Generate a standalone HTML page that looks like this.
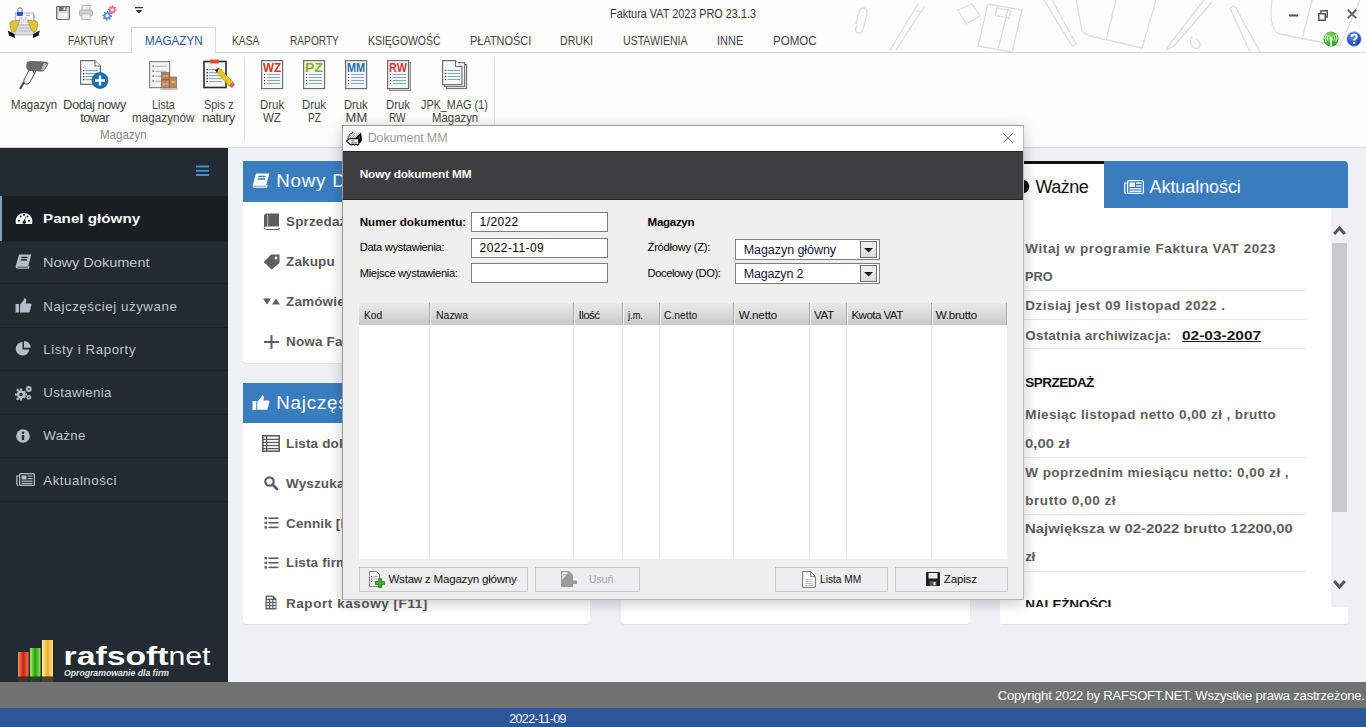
<!DOCTYPE html><html><head><meta charset="utf-8"><style>
*{margin:0;padding:0;box-sizing:border-box}
html,body{width:1366px;height:727px;overflow:hidden;background:#eef0f6;font-family:"Liberation Sans",sans-serif;position:relative}
.a{position:absolute}
.t{position:absolute;white-space:nowrap}
svg{position:absolute;overflow:visible}
</style></head><body>
<div class="a" style="left:0px;top:0px;width:1366px;height:147px;background:#fdfdfd;"></div>
<svg style="left:840px;top:0px" width="526" height="52" viewBox="0 0 526 52"><g fill="none" stroke="#dedede" stroke-width="1.3" stroke-linejoin="round">
<path d="M17 26 Q14 30 17 33 Q21 34 23 30 L27 14 Q28 9 24 8 Q20 8 19 12 L16 24"/>
<path d="M78 4 L50 50 M84 7 L56 50 M76 10 L82 12"/>
<path d="M118 10 L132 4 L140 16 L126 24 Z"/>
<path d="M148 4 L182 10 L172 52 L138 46 Z M168 9 L158 50"/><rect x="156" y="9" width="14" height="8" transform="rotate(12 163 13)"/>
<path d="M204 0 L232 46 L236 44 L212 0"/>
<path d="M236 0 L242 30 Q244 34 250 36 L302 48 L316 0"/><path d="M276 0 L266 40"/>
<path d="M364 0 L330 44 L326 50 L334 46 L372 2"/>
<path d="M352 36 Q348 42 354 48 Q360 50 360 44 L356 38"/>
<path d="M390 8 Q396 4 398 12 L420 52 M390 8 L410 52"/>
<path d="M432 0 Q428 30 440 34 L500 46 L520 0 M472 0 L462 40"/>
</g></svg>
<div class="a" style="left:0px;top:52px;width:131px;height:1px;background:#d9d9d9;"></div>
<div class="a" style="left:216px;top:52px;width:1150px;height:1px;background:#d9d9d9;"></div>
<div class="a" style="left:131px;top:27px;width:85px;height:26px;border:1px solid #d9d9d9;border-bottom:none;background:#fdfdfd"></div>
<div class="a" style="left:0px;top:147px;width:1366px;height:1px;background:#d6d6d6;"></div>
<div class="a" style="left:244px;top:58px;width:1px;height:82px;background:#e4e4e4;"></div>
<div class="a" style="left:494px;top:58px;width:1px;height:82px;background:#e4e4e4;"></div>
<div class="a" style="left:0px;top:148px;width:228px;height:534px;background:#232a31;"></div>
<div class="a" style="left:0px;top:196px;width:228px;height:45px;background:#191e23;"></div>
<div class="a" style="left:0px;top:196px;width:2px;height:45px;background:#7aa3c0;"></div>
<div class="a" style="left:0px;top:241px;width:228px;height:1px;background:#1c2227;"></div>
<div class="a" style="left:0px;top:283px;width:228px;height:1px;background:#1c2227;"></div>
<div class="a" style="left:0px;top:327px;width:228px;height:1px;background:#1c2227;"></div>
<div class="a" style="left:0px;top:370px;width:228px;height:1px;background:#1c2227;"></div>
<div class="a" style="left:0px;top:414px;width:228px;height:1px;background:#1c2227;"></div>
<div class="a" style="left:0px;top:457px;width:228px;height:1px;background:#1c2227;"></div>
<div class="a" style="left:0px;top:501px;width:228px;height:1px;background:#1c2227;"></div>
<div class="a" style="left:243px;top:161px;width:347px;height:202px;background:#fff;border-radius:3px;box-shadow:0 1px 1px rgba(0,0,0,.06)"></div>
<div class="a" style="left:243px;top:161px;width:347px;height:41px;background:#3a7dbe"></div>
<div class="a" style="left:243px;top:383px;width:347px;height:241px;background:#fff;border-radius:3px;box-shadow:0 1px 1px rgba(0,0,0,.06)"></div>
<div class="a" style="left:243px;top:383px;width:347px;height:40px;background:#3a7dbe"></div>
<div class="a" style="left:621px;top:161px;width:349px;height:463px;background:#fff;border-radius:3px;box-shadow:0 1px 1px rgba(0,0,0,.06)"></div>
<div class="a" style="left:1000px;top:161px;width:348px;height:463px;background:#fff;border-radius:3px;box-shadow:0 1px 1px rgba(0,0,0,.06)"></div>
<div class="a" style="left:1000px;top:161px;width:104px;height:3px;background:#111"></div>
<div class="a" style="left:1104px;top:161px;width:244px;height:47px;background:#3a7dbe;border-radius:0 4px 0 0"></div>
<div class="a" style="left:1024px;top:290px;width:282px;height:1px;background:#e6e6e6;"></div>
<div class="a" style="left:1024px;top:319px;width:282px;height:1px;background:#e6e6e6;"></div>
<div class="a" style="left:1024px;top:348px;width:282px;height:1px;background:#e6e6e6;"></div>
<div class="a" style="left:1024px;top:457px;width:282px;height:1px;background:#e6e6e6;"></div>
<div class="a" style="left:1024px;top:514px;width:282px;height:1px;background:#e6e6e6;"></div>
<div class="a" style="left:1024px;top:571px;width:282px;height:1px;background:#e6e6e6;"></div>
<div class="a" style="left:1331px;top:208px;width:17px;height:399px;background:#f0eff2;"></div>
<div class="a" style="left:1332px;top:243px;width:15px;height:269px;background:#c9c8cc;"></div>
<div class="a" style="left:0px;top:682px;width:1366px;height:26px;background:#707272;"></div>
<div class="a" style="left:0px;top:708px;width:1366px;height:19px;background:#2b579a;"></div>
<svg style="left:4px;top:4px" width="40" height="38" viewBox="0 0 40 38">
<path d="M14 9 V5.5 Q14 3.8 16 3.8 Q18 3.8 18 5.5 V9" fill="none" stroke="#666" stroke-width="1"/>
<path d="M27.5 9.5 L30.5 11 V24 H28 Z" fill="#e8e8e8" stroke="#999" stroke-width="0.6"/>
<rect x="11.2" y="9" width="18.5" height="12" fill="#fbfbfd" stroke="#8a8a9a" stroke-width="0.7"/>
<rect x="12.8" y="8.1" width="6" height="3.8" fill="#2450c0"/>
<path d="M15 14 H19 M21 14 H23 M22 11.5 H26" stroke="#8890a0" stroke-width="0.7"/>
<rect x="14" y="15.2" width="11" height="5.8" fill="#e2c6d6"/>
<path d="M14 17.2 H25 M14 19.2 H25 M16.2 15.2 V21 M18.4 15.2 V21 M20.6 15.2 V21 M22.8 15.2 V21" stroke="#fff" stroke-width="0.6"/>
<path d="M12 21 H29 L30 31 H11.5 Z" fill="#dcdde0" stroke="#a0a0a8" stroke-width="0.6"/>
<path d="M14 24 H27 M13.5 27 H27.5" stroke="#b8b8c0" stroke-width="0.8"/>
<path d="M5.8 18.5 Q8 15.5 10.5 17 L15.7 16.3 Q16.5 17.5 14.5 19 L12.8 24.5 Q11 28.5 8 28.3 Q5.5 24 5.8 18.5 Z" fill="#e2c33c" stroke="#9a8420" stroke-width="0.6"/>
<path d="M33.7 18.5 Q31.5 15.5 29 17 L23.8 16.3 Q23 17.5 25 19 L26.7 24.5 Q28.5 28.5 31.5 28.3 Q34 24 33.7 18.5 Z" fill="#e2c33c" stroke="#9a8420" stroke-width="0.6"/>
<path d="M3.8 26.5 L10.5 30 L11 34 L5 31.5 Z" fill="#111"/>
<path d="M35.8 26.5 L29.2 30 L28.8 34 L34.6 31.5 Z" fill="#111"/>
</svg>
<svg style="left:56px;top:6px" width="14" height="14" viewBox="0 0 14 14"><rect x="0.6" y="0.6" width="12.8" height="12.8" rx="0.8" fill="#d8d8d8" stroke="#6e6e6e" stroke-width="1.2"/>
<rect x="3" y="0.6" width="7.5" height="4.5" fill="#6e6e6e"/><rect x="7.5" y="1.3" width="2" height="3" fill="#ddd"/>
<rect x="2.5" y="7" width="9" height="6" fill="#f3f3f3"/></svg>
<svg style="left:79px;top:5px" width="14" height="15" viewBox="0 0 14 15"><rect x="3" y="0.5" width="8" height="5" fill="#f2f2f2" stroke="#b9b9b9"/>
<rect x="0.5" y="5" width="13" height="6" rx="1.5" fill="#cfcfcf" stroke="#b0b0b0"/>
<rect x="3" y="9" width="8" height="5.5" fill="#f5f5f5" stroke="#b9b9b9"/></svg>
<svg style="left:102px;top:5px" width="15" height="16" viewBox="0 0 15 16"><path d="M14.80 4.80 L14.71 5.70 L13.25 6.06 L12.94 6.63 L13.45 8.05 L12.76 8.62 L11.46 7.85 L10.84 8.04 L10.20 9.40 L9.30 9.31 L8.94 7.85 L8.37 7.54 L6.95 8.05 L6.38 7.36 L7.15 6.06 L6.96 5.44 L5.60 4.80 L5.69 3.90 L7.15 3.54 L7.46 2.97 L6.95 1.55 L7.64 0.98 L8.94 1.75 L9.56 1.56 L10.20 0.20 L11.10 0.29 L11.46 1.75 L12.03 2.06 L13.45 1.55 L14.02 2.24 L13.25 3.54 L13.44 4.16 Z M11.7 4.8 A1.5 1.5 0 1 0 8.7 4.8 A1.5 1.5 0 1 0 11.7 4.8 Z" fill="#e87a80" fill-rule="evenodd"/><path d="M10.20 10.80 L10.10 11.78 L8.53 12.18 L8.19 12.80 L8.74 14.34 L7.98 14.96 L6.58 14.13 L5.90 14.33 L5.20 15.80 L4.22 15.70 L3.82 14.13 L3.20 13.79 L1.66 14.34 L1.04 13.58 L1.87 12.18 L1.67 11.50 L0.20 10.80 L0.30 9.82 L1.87 9.42 L2.21 8.80 L1.66 7.26 L2.42 6.64 L3.82 7.47 L4.50 7.27 L5.20 5.80 L6.18 5.90 L6.58 7.47 L7.20 7.81 L8.74 7.26 L9.36 8.02 L8.53 9.42 L8.73 10.10 Z M6.9 10.8 A1.7 1.7 0 1 0 3.5 10.8 A1.7 1.7 0 1 0 6.9 10.8 Z" fill="#5f92d6" fill-rule="evenodd"/></svg>
<svg style="left:135px;top:7px" width="8" height="7" viewBox="0 0 8 7"><rect x="0" y="0" width="8" height="1.3" fill="#333"/><path d="M0.5 3 H7.5 L4 6.5 Z" fill="#333"/></svg>
<svg style="left:1289px;top:14px" width="9" height="3" viewBox="0 0 9 3"><rect x="0" y="0.5" width="9" height="2" fill="#555"/></svg>
<svg style="left:1318px;top:10px" width="10" height="11" viewBox="0 0 10 11"><rect x="0.75" y="3.75" width="6.5" height="6.5" fill="none" stroke="#555" stroke-width="1.5"/><path d="M3 3.5 V0.75 H9.25 V7 H7.5" fill="none" stroke="#555" stroke-width="1.5"/></svg>
<svg style="left:1347px;top:9px" width="10" height="10" viewBox="0 0 10 10"><path d="M0.8 0.8 L9.2 9.2 M9.2 0.8 L0.8 9.2" stroke="#555" stroke-width="1.7"/></svg>
<svg style="left:1323px;top:31px" width="16" height="16" viewBox="0 0 16 16"><defs><radialGradient id="gg" cx="40%" cy="35%" r="65%"><stop offset="0" stop-color="#8fe070"/><stop offset="1" stop-color="#2e9a1e"/></radialGradient></defs>
<circle cx="8" cy="8" r="7.6" fill="url(#gg)"/><path d="M7.2 8 H8.8 V15 H7.2Z" fill="#e9ffe0"/><circle cx="8" cy="7" r="1.3" fill="#e9ffe0"/>
<path d="M5 4.5 Q3.5 7 5 9.5 M11 4.5 Q12.5 7 11 9.5 M3.2 3 Q1 7 3.2 11 M12.8 3 Q15 7 12.8 11" fill="none" stroke="#e9ffe0" stroke-width="1"/></svg>
<svg style="left:1346px;top:31px" width="16" height="16" viewBox="0 0 16 16"><defs><radialGradient id="bg2" cx="40%" cy="35%" r="65%"><stop offset="0" stop-color="#5a8ef0"/><stop offset="1" stop-color="#1c3fa8"/></radialGradient></defs>
<circle cx="8" cy="8" r="7.4" fill="url(#bg2)" stroke="#c9d3ea" stroke-width="0.8"/>
<path d="M5.5 6 Q5.5 3.5 8 3.5 Q10.7 3.5 10.7 5.8 Q10.7 7.3 9 8 Q8.2 8.4 8.2 9.6" fill="none" stroke="#fff" stroke-width="2"/><rect x="7.1" y="10.8" width="2.2" height="2" fill="#fff"/></svg>
<svg style="left:18px;top:60px" width="32" height="30" viewBox="0 0 32 30"><path d="M9 2 Q12 0 29 2 Q31 3 30 5 L26 11 Q24 12 18 11 L10 10 Q7 8 9 2 Z" fill="#6a6a6a"/>
<path d="M26 3 L29.5 4 L25.5 10.5 L23 10 Z" fill="#bdbdbd"/>
<path d="M11 10 L18 11 L12 22 Q10 25 7 24 Q5 23 6 20 Z" fill="#f2f2f2" stroke="#555" stroke-width="1"/>
<path d="M15 11 L17 14" stroke="#555" stroke-width="1.2"/>
<path d="M6 22 L2 29" stroke="#444" stroke-width="2"/></svg>
<svg style="left:80px;top:60px" width="30" height="30" viewBox="0 0 30 30"><path d="M0.6 0.6 H15 L20.4 6 V24.4 H0.6 Z" fill="#f4f6f7" stroke="#707070" stroke-width="1.2"/><path d="M15 0.6 V6 H20.4" fill="#fff" stroke="#707070" stroke-width="1.1"/><g fill="#333"><rect x="3" y="10" width="1.3" height="1.3"/><rect x="3" y="13" width="1.3" height="1.3"/><rect x="3" y="16" width="1.3" height="1.3"/><rect x="3" y="19" width="1.3" height="1.3"/></g><g fill="#6b8fa0"><rect x="5.5" y="10.2" width="12" height="0.9"/><rect x="5.5" y="13.2" width="12" height="0.9"/><rect x="5.5" y="16.2" width="12" height="0.9"/><rect x="5.5" y="19.2" width="12" height="0.9"/></g><circle cx="20" cy="20.5" r="8" fill="#1b6fb0" stroke="#0d4f86" stroke-width="0.6"/><path d="M20 15.5 V25.5 M15 20.5 H25" stroke="#fff" stroke-width="2.4"/></svg>
<svg style="left:149px;top:61px" width="30" height="30" viewBox="0 0 30 30"><rect x="0.6" y="0.6" width="20" height="26" fill="#f2f3f5" stroke="#8a8a8a" stroke-width="1.2"/><g fill="#444"><rect x="3.5" y="4.5" width="1.3" height="1.3"/><rect x="3.5" y="9.5" width="1.3" height="1.3"/><rect x="3.5" y="14.5" width="1.3" height="1.3"/><rect x="3.5" y="19.5" width="1.3" height="1.3"/></g><g fill="#9aa5ab"><rect x="6.5" y="4.8" width="11" height="0.9"/><rect x="6.5" y="9.8" width="11" height="0.9"/><rect x="6.5" y="14.8" width="11" height="0.9"/><rect x="6.5" y="19.8" width="11" height="0.9"/></g><rect x="12.5" y="11.5" width="8" height="7.5" fill="#b98257" stroke="#7a5030" stroke-width="0.6"/><rect x="12.5" y="19" width="8" height="8" fill="#c29066" stroke="#7a5030" stroke-width="0.6"/><rect x="20.5" y="16" width="7" height="11" fill="#bb8a60" stroke="#7a5030" stroke-width="0.6"/><path d="M14 15 H19 M14 23 H19 M22 21 H26" stroke="#e8d0b0" stroke-width="1"/><path d="M16.5 11.5 V19 M16.5 19 V27" stroke="#8a6040" stroke-width="0.5"/><path d="M11 28 H29" stroke="#b0b0b0" stroke-width="1.2"/></svg>
<svg style="left:203px;top:60px" width="33" height="30" viewBox="0 0 33 30"><rect x="1" y="1.5" width="22" height="26" fill="#f3f5f6" stroke="#2a2a2a" stroke-width="1.6"/><rect x="7" y="-0.5" width="9" height="4" rx="1" fill="#e0502a"/><g fill="#222"><rect x="3.5" y="9" width="1.3" height="1.3"/><rect x="3.5" y="12" width="1.3" height="1.3"/><rect x="3.5" y="15" width="1.3" height="1.3"/><rect x="3.5" y="18" width="1.3" height="1.3"/><rect x="3.5" y="21" width="1.3" height="1.3"/></g><g fill="#8aa0aa"><rect x="6" y="9.2" width="13" height="0.9"/><rect x="6" y="12.2" width="13" height="0.9"/><rect x="6" y="15.2" width="13" height="0.9"/><rect x="6" y="18.2" width="13" height="0.9"/><rect x="6" y="21.2" width="13" height="0.9"/></g><path d="M12 10 L16 8 L30 22 L26 26 Z" fill="#e8c820" stroke="#a08a10" stroke-width="0.6"/><path d="M26 26 L30 22 L32 25 L29 28 Z" fill="#e06070"/><path d="M12 10 L16 8 L14 13 Z" fill="#222"/></svg>
<svg style="left:261px;top:60px" width="25" height="32" viewBox="0 0 25 32"><rect x="0.6" y="0.6" width="21" height="28" fill="#f2f4f5" stroke="#6e6e6e" stroke-width="1.2"/><text x="2" y="12.3" font-family="Liberation Sans" font-weight="bold" font-size="12.5" fill="#d0381c" textLength="18" lengthAdjust="spacingAndGlyphs">WZ</text><g fill="#222"><rect x="3" y="14" width="1" height="1"/><rect x="3" y="17" width="1" height="1"/><rect x="3" y="20" width="1" height="1"/><rect x="3" y="23" width="1" height="1"/></g><g fill="#7aa0b8"><rect x="6" y="14" width="13" height="0.9"/><rect x="6" y="17" width="13" height="0.9"/><rect x="6" y="20" width="13" height="0.9"/><rect x="6" y="23" width="13" height="0.9"/></g></svg>
<svg style="left:303px;top:60px" width="25" height="32" viewBox="0 0 25 32"><rect x="0.6" y="0.6" width="21" height="28" fill="#f2f4f5" stroke="#6e6e6e" stroke-width="1.2"/><text x="2" y="12.3" font-family="Liberation Sans" font-weight="bold" font-size="12.5" fill="#8ab020" textLength="18" lengthAdjust="spacingAndGlyphs">PZ</text><g fill="#222"><rect x="3" y="14" width="1" height="1"/><rect x="3" y="17" width="1" height="1"/><rect x="3" y="20" width="1" height="1"/><rect x="3" y="23" width="1" height="1"/></g><g fill="#7aa0b8"><rect x="6" y="14" width="13" height="0.9"/><rect x="6" y="17" width="13" height="0.9"/><rect x="6" y="20" width="13" height="0.9"/><rect x="6" y="23" width="13" height="0.9"/></g></svg>
<svg style="left:345px;top:60px" width="25" height="32" viewBox="0 0 25 32"><rect x="0.6" y="0.6" width="21" height="28" fill="#f2f4f5" stroke="#6e6e6e" stroke-width="1.2"/><text x="2" y="12.3" font-family="Liberation Sans" font-weight="bold" font-size="12.5" fill="#1f6ea6" textLength="18" lengthAdjust="spacingAndGlyphs">MM</text><g fill="#222"><rect x="3" y="14" width="1" height="1"/><rect x="3" y="17" width="1" height="1"/><rect x="3" y="20" width="1" height="1"/><rect x="3" y="23" width="1" height="1"/></g><g fill="#7aa0b8"><rect x="6" y="14" width="13" height="0.9"/><rect x="6" y="17" width="13" height="0.9"/><rect x="6" y="20" width="13" height="0.9"/><rect x="6" y="23" width="13" height="0.9"/></g></svg>
<svg style="left:387px;top:60px" width="25" height="32" viewBox="0 0 25 32"><rect x="2.5" y="2.5" width="21" height="28" fill="#e4e6e8" stroke="#909090" stroke-width="1"/><rect x="0.6" y="0.6" width="21" height="28" fill="#f2f4f5" stroke="#6e6e6e" stroke-width="1.2"/><text x="2" y="12.3" font-family="Liberation Sans" font-weight="bold" font-size="12.5" fill="#e03535" textLength="18" lengthAdjust="spacingAndGlyphs">RW</text><g fill="#222"><rect x="3" y="14" width="1" height="1"/><rect x="3" y="17" width="1" height="1"/><rect x="3" y="20" width="1" height="1"/><rect x="3" y="23" width="1" height="1"/></g><g fill="#7aa0b8"><rect x="6" y="14" width="13" height="0.9"/><rect x="6" y="17" width="13" height="0.9"/><rect x="6" y="20" width="13" height="0.9"/><rect x="6" y="23" width="13" height="0.9"/></g></svg>
<svg style="left:442px;top:60px" width="26" height="30" viewBox="0 0 26 30"><rect x="4.6" y="4.6" width="20" height="24" fill="#f2f4f5" stroke="#6e6e6e" stroke-width="1.1"/><rect x="2.6" y="2.6" width="20" height="24" fill="#f4f6f7" stroke="#6e6e6e" stroke-width="1.1"/><path d="M0.6 0.6 H13.5 L20 7 V24.6 H0.6 Z" fill="#f6f8f9" stroke="#6e6e6e" stroke-width="1.2"/><path d="M13.5 0.6 V6.5 H20" fill="#fff" stroke="#6e6e6e" stroke-width="1.1"/><g fill="#222"><rect x="3" y="10" width="1.1" height="1.1"/><rect x="3" y="13" width="1.1" height="1.1"/><rect x="3" y="16" width="1.1" height="1.1"/><rect x="3" y="19" width="1.1" height="1.1"/></g><g fill="#7a9aa8"><rect x="5.5" y="10.1" width="12.5" height="0.9"/><rect x="5.5" y="13.1" width="12.5" height="0.9"/><rect x="5.5" y="16.1" width="12.5" height="0.9"/><rect x="5.5" y="19.1" width="12.5" height="0.9"/></g></svg>
<svg style="left:196px;top:165px" width="13" height="12" viewBox="0 0 13 12"><rect x="0" y="0.5" width="13" height="2" fill="#3f8fc9"/><rect x="0" y="4.8" width="13" height="2" fill="#3f8fc9"/><rect x="0" y="9" width="13" height="2" fill="#3f8fc9"/></svg>
<svg style="left:15px;top:211px" width="18" height="14" viewBox="0 0 18 14"><path d="M1 13 A8.4 8.4 0 1 1 17 13 Z" fill="#fff"/><circle cx="4" cy="9.8" r="1" fill="#191e23"/><circle cx="5.6" cy="5.6" r="1" fill="#191e23"/><circle cx="9" cy="4" r="1" fill="#191e23"/><circle cx="12.4" cy="5.6" r="1" fill="#191e23"/><circle cx="14" cy="9.8" r="1" fill="#191e23"/><path d="M8.5 10.8 L10.8 4.8 L10.1 11.2 Z" fill="#191e23"/><circle cx="9.2" cy="11.3" r="1.7" fill="#191e23"/></svg>
<svg style="left:15px;top:254px" width="17" height="15" viewBox="0 0 17 15"><path d="M4 0.5 H16.3 L13.3 12 H2.3 Q0.8 12 1.2 10.5 Z" fill="#b4bec8"/><path d="M1.5 11 Q0.5 14.3 3 14.3 H13.5 L14 12.8 H3.2 Q2 12.8 2.2 12" stroke="#b4bec8" stroke-width="1.1" fill="none"/><path d="M6.3 3.5 H12.5 M5.8 6 H12" stroke="#232a31" stroke-width="1.3"/></svg>
<svg style="left:15px;top:298px" width="17" height="15" viewBox="0 0 17 15"><rect x="0.5" y="6" width="3.5" height="8.5" fill="#b4bec8"/><path d="M5 6.5 L8.5 2.5 L9.3 0.3 Q11.6 0.3 11.3 2.8 L10.6 5.5 H15 Q16.6 5.5 16.6 7 Q16.6 8 15.6 8.5 Q16.4 9.5 15.3 10.5 Q16 11.6 14.8 12.3 Q15.2 14.5 13.5 14.5 H5 Z" fill="#b4bec8"/></svg>
<svg style="left:16px;top:341px" width="16" height="15" viewBox="0 0 16 15"><path d="M6.5 1 A6.8 6.8 0 1 0 13.3 8.5 H6.5 Z" fill="#b4bec8"/><path d="M8 0 A6.8 6.8 0 0 1 14.8 6.8 H8 Z" fill="#b4bec8"/></svg>
<svg style="left:15px;top:385px" width="18" height="16" viewBox="0 0 18 16"><g fill="#b4bec8"><circle cx="6" cy="9.5" r="4"/><path d="M4.9 3.5 h2.2 v2.5 h-2.2z M4.9 13 h2.2 v2.5 h-2.2z M0 8.4 h2.5 v2.2 h-2.5z M9.5 8.4 h2.5 v2.2 h-2.5z M1 5 l1.6-1.6 1.8 1.8 -1.6 1.6z M7.6 11.6 l1.6-1.6 1.8 1.8-1.6 1.6z M1 14 l1.6 1.6 1.8-1.8-1.6-1.6z M7.6 7.4 l1.6 1.6 1.8-1.8-1.6-1.6z"/><circle cx="13.8" cy="4" r="2.9"/><circle cx="13.8" cy="12.3" r="2.4"/></g><circle cx="6" cy="9.5" r="1.7" fill="#232a31"/><circle cx="13.8" cy="4" r="1" fill="#232a31"/><circle cx="13.8" cy="12.3" r="0.9" fill="#232a31"/></svg>
<svg style="left:16px;top:429px" width="14" height="14" viewBox="0 0 14 14"><circle cx="7" cy="7" r="6.8" fill="#b4bec8"/><rect x="5.8" y="6" width="2.4" height="5" fill="#232a31"/><circle cx="7" cy="3.7" r="1.3" fill="#232a31"/></svg>
<svg style="left:16px;top:473px" width="19" height="13" viewBox="0 0 19 13"><rect x="3.6" y="0.6" width="14.8" height="11.8" rx="1" fill="none" stroke="#b4bec8" stroke-width="1.2"/><path d="M3.6 3 H0.8 V10.8 Q0.8 12.4 2.4 12.4" fill="none" stroke="#b4bec8" stroke-width="1.2"/><rect x="5.5" y="2.5" width="5" height="4" fill="#b4bec8"/><rect x="11.5" y="2.5" width="5" height="1.2" fill="#b4bec8"/><rect x="11.5" y="5" width="5" height="1.2" fill="#b4bec8"/><rect x="5.5" y="7.6" width="11" height="1.2" fill="#b4bec8"/><rect x="5.5" y="9.9" width="11" height="1.2" fill="#b4bec8"/></svg>
<svg style="left:252px;top:173px" width="18" height="15" viewBox="0 0 18 15"><path d="M4 0.5 H17.3 L14.3 12 H2.3 Q0.8 12 1.2 10.5 Z" fill="#fff"/><path d="M1.5 11 Q0.5 14.3 3 14.3 H14.5 L15 12.8 H3.2 Q2 12.8 2.2 12" stroke="#fff" stroke-width="1.1" fill="none"/><path d="M6.3 3.5 H13.5 M5.8 6 H13" stroke="#3a7dbe" stroke-width="1.3"/></svg>
<svg style="left:252px;top:395px" width="18" height="15" viewBox="0 0 18 15"><rect x="0.5" y="6" width="3.8" height="9" fill="#fff"/><path d="M5.3 6.5 L9 2.5 L9.8 0.3 Q12.2 0.3 11.9 2.8 L11.2 5.5 H16 Q17.6 5.5 17.6 7 Q17.6 8 16.6 8.5 Q17.4 9.5 16.3 10.5 Q17 11.6 15.8 12.3 Q16.2 14.8 14.5 14.8 H5.3 Z" fill="#fff"/></svg>
<svg style="left:263px;top:213px" width="17" height="17" viewBox="0 0 17 17"><path d="M3.5 0.5 H16 V13.5 H3.5 Q1 13.5 1 15.5 V3 Q1 0.5 3.5 0.5Z" fill="#5e5e5e"/><path d="M1 15 Q1 16.5 3.5 16.5 H16 V14.5" fill="none" stroke="#5e5e5e" stroke-width="1"/><rect x="4" y="1.5" width="1.2" height="11.5" fill="#fff" opacity="0.5"/></svg>
<svg style="left:263px;top:254px" width="17" height="16" viewBox="0 0 17 16"><path d="M8 0.5 H16.5 V9 L8.5 15.5 L0.8 8 Z" fill="#5e5e5e"/><circle cx="13" cy="4" r="1.4" fill="#fff"/></svg>
<svg style="left:263px;top:298px" width="17" height="7" viewBox="0 0 17 7"><path d="M0 0.5 H8 L4 6.5 Z M9 6.5 H17 L13 0.5 Z" fill="#5e5e5e"/></svg>
<svg style="left:264px;top:335px" width="15" height="14" viewBox="0 0 15 14"><rect x="6.5" y="0" width="2" height="14" fill="#5e5e5e"/><rect x="0" y="6" width="15" height="2" fill="#5e5e5e"/></svg>
<svg style="left:262px;top:435px" width="18" height="17" viewBox="0 0 18 17"><rect x="0.8" y="0.8" width="16.4" height="15.4" fill="none" stroke="#5e5e5e" stroke-width="1.6"/><rect x="0.8" y="3.7" width="16.4" height="1.3" fill="#5e5e5e"/><rect x="0.8" y="6.800000000000001" width="16.4" height="1.3" fill="#5e5e5e"/><rect x="0.8" y="9.9" width="16.4" height="1.3" fill="#5e5e5e"/><rect x="0.8" y="13.0" width="16.4" height="1.3" fill="#5e5e5e"/><rect x="4" y="0.8" width="1.3" height="15" fill="#5e5e5e"/></svg>
<svg style="left:264px;top:476px" width="14" height="14" viewBox="0 0 14 14"><circle cx="5.5" cy="5.5" r="4.2" fill="none" stroke="#5e5e5e" stroke-width="2.2"/><path d="M8.5 8.5 L13 13" stroke="#5e5e5e" stroke-width="2.8" stroke-linecap="round"/></svg>
<svg style="left:264px;top:517px" width="15" height="12" viewBox="0 0 15 12"><rect x="0.5" y="0.0" width="2.4" height="2.4" fill="#5e5e5e"/><rect x="4.5" y="0.4" width="10" height="1.6" fill="#5e5e5e"/><rect x="0.5" y="4.6" width="2.4" height="2.4" fill="#5e5e5e"/><rect x="4.5" y="5.0" width="10" height="1.6" fill="#5e5e5e"/><rect x="0.5" y="9.2" width="2.4" height="2.4" fill="#5e5e5e"/><rect x="4.5" y="9.6" width="10" height="1.6" fill="#5e5e5e"/></svg>
<svg style="left:264px;top:557px" width="15" height="12" viewBox="0 0 15 12"><rect x="0.5" y="0.0" width="2.4" height="2.4" fill="#5e5e5e"/><rect x="4.5" y="0.4" width="10" height="1.6" fill="#5e5e5e"/><rect x="0.5" y="4.6" width="2.4" height="2.4" fill="#5e5e5e"/><rect x="4.5" y="5.0" width="10" height="1.6" fill="#5e5e5e"/><rect x="0.5" y="9.2" width="2.4" height="2.4" fill="#5e5e5e"/><rect x="4.5" y="9.6" width="10" height="1.6" fill="#5e5e5e"/></svg>
<svg style="left:265px;top:595px" width="12" height="15" viewBox="0 0 12 15"><path d="M0.5 0.5 H8 L11.5 4 V14.5 H0.5 Z" fill="#5e5e5e"/><rect x="1.8" y="5" width="2.2" height="2" fill="#fff" opacity="0.85"/><rect x="5.1" y="5" width="2.2" height="2" fill="#fff" opacity="0.85"/><rect x="8.4" y="5" width="2.2" height="2" fill="#fff" opacity="0.85"/><rect x="1.8" y="8" width="2.2" height="2" fill="#fff" opacity="0.85"/><rect x="5.1" y="8" width="2.2" height="2" fill="#fff" opacity="0.85"/><rect x="8.4" y="8" width="2.2" height="2" fill="#fff" opacity="0.85"/><rect x="1.8" y="11" width="2.2" height="2" fill="#fff" opacity="0.85"/><rect x="5.1" y="11" width="2.2" height="2" fill="#fff" opacity="0.85"/><rect x="8.4" y="11" width="2.2" height="2" fill="#fff" opacity="0.85"/><rect x="1.8" y="1.8" width="6" height="2" fill="#fff" opacity="0.85"/></svg>
<div class="t" style="left:609.70px;top:7px;font-size:13px;line-height:13px;color:#333;transform:scaleX(0.8349);transform-origin:0 0;">Faktura VAT 2023 PRO 23.1.3</div>
<div class="t" style="left:67.70px;top:34px;font-size:13px;line-height:13px;color:#444;transform:scaleX(0.7817);transform-origin:0 0;">FAKTURY</div>
<div class="t" style="left:144.50px;top:34px;font-size:13px;line-height:13px;color:#2f5597;transform:scaleX(0.8953);transform-origin:0 0;">MAGAZYN</div>
<div class="t" style="left:231.80px;top:34px;font-size:13px;line-height:13px;color:#444;transform:scaleX(0.7886);transform-origin:0 0;">KASA</div>
<div class="t" style="left:289.60px;top:34px;font-size:13px;line-height:13px;color:#444;transform:scaleX(0.7810);transform-origin:0 0;">RAPORTY</div>
<div class="t" style="left:368.00px;top:34px;font-size:13px;line-height:13px;color:#444;transform:scaleX(0.8022);transform-origin:0 0;">KSIĘGOWOŚĆ</div>
<div class="t" style="left:470.30px;top:34px;font-size:13px;line-height:13px;color:#444;transform:scaleX(0.8431);transform-origin:0 0;">PŁATNOŚCI</div>
<div class="t" style="left:560.20px;top:34px;font-size:13px;line-height:13px;color:#444;transform:scaleX(0.8125);transform-origin:0 0;">DRUKI</div>
<div class="t" style="left:622.50px;top:34px;font-size:13px;line-height:13px;color:#444;transform:scaleX(0.8125);transform-origin:0 0;">USTAWIENIA</div>
<div class="t" style="left:717.30px;top:34px;font-size:13px;line-height:13px;color:#444;transform:scaleX(0.8484);transform-origin:0 0;">INNE</div>
<div class="t" style="left:773.40px;top:34px;font-size:13px;line-height:13px;color:#444;transform:scaleX(0.8898);transform-origin:0 0;">POMOC</div>
<div class="t" style="left:10.60px;top:98px;font-size:13px;line-height:13px;color:#444;transform:scaleX(0.8755);transform-origin:0 0;">Magazyn</div>
<div class="t" style="left:63.10px;top:98px;font-size:13px;line-height:13px;color:#444;letter-spacing:-0.533px;">Dodaj nowy</div>
<div class="t" style="left:80.20px;top:111px;font-size:13px;line-height:13px;color:#444;letter-spacing:-0.600px;">towar</div>
<div class="t" style="left:151.50px;top:98px;font-size:13px;line-height:13px;color:#444;transform:scaleX(0.8321);transform-origin:0 0;">Lista</div>
<div class="t" style="left:131.80px;top:111px;font-size:13px;line-height:13px;color:#444;transform:scaleX(0.9014);transform-origin:0 0;">magazynów</div>
<div class="t" style="left:204.00px;top:98px;font-size:13px;line-height:13px;color:#444;transform:scaleX(0.8371);transform-origin:0 0;">Spis z</div>
<div class="t" style="left:202.20px;top:111px;font-size:13px;line-height:13px;color:#444;letter-spacing:-0.620px;">natury</div>
<div class="t" style="left:259.60px;top:98px;font-size:13px;line-height:13px;color:#444;transform:scaleX(0.8786);transform-origin:0 0;">Druk</div>
<div class="t" style="left:263.20px;top:111px;font-size:13px;line-height:13px;color:#444;transform:scaleX(0.8850);transform-origin:0 0;">WZ</div>
<div class="t" style="left:301.50px;top:98px;font-size:13px;line-height:13px;color:#444;transform:scaleX(0.8750);transform-origin:0 0;">Druk</div>
<div class="t" style="left:307.60px;top:111px;font-size:13px;line-height:13px;color:#444;transform:scaleX(0.7824);transform-origin:0 0;">PZ</div>
<div class="t" style="left:343.70px;top:98px;font-size:13px;line-height:13px;color:#444;transform:scaleX(0.8643);transform-origin:0 0;">Druk</div>
<div class="t" style="left:345.60px;top:111px;font-size:13px;line-height:13px;color:#444;letter-spacing:0.000px;">MM</div>
<div class="t" style="left:385.60px;top:98px;font-size:13px;line-height:13px;color:#444;transform:scaleX(0.8714);transform-origin:0 0;">Druk</div>
<div class="t" style="left:389.40px;top:111px;font-size:13px;line-height:13px;color:#444;transform:scaleX(0.7773);transform-origin:0 0;">RW</div>
<div class="t" style="left:420.80px;top:98px;font-size:13px;line-height:13px;color:#444;transform:scaleX(0.8325);transform-origin:0 0;">JPK_MAG (1)</div>
<div class="t" style="left:431.90px;top:111px;font-size:13px;line-height:13px;color:#444;transform:scaleX(0.8755);transform-origin:0 0;">Magazyn</div>
<div class="t" style="left:100.30px;top:128px;font-size:13px;line-height:13px;color:#8a8a8a;transform:scaleX(0.8868);transform-origin:0 0;">Magazyn</div>
<div class="t" style="left:43.30px;top:212px;font-size:13.6px;line-height:13.6px;color:#fff;font-weight:bold;transform:scaleX(1.1184);transform-origin:0 0;">Panel główny</div>
<div class="t" style="left:43.30px;top:256px;font-size:13.3px;line-height:13.3px;color:#bcc6cf;transform:scaleX(1.0918);transform-origin:0 0;">Nowy Dokument</div>
<div class="t" style="left:43.30px;top:300px;font-size:13.3px;line-height:13.3px;color:#bcc6cf;letter-spacing:0.561px;">Najczęściej używane</div>
<div class="t" style="left:43.30px;top:343px;font-size:13.3px;line-height:13.3px;color:#bcc6cf;letter-spacing:0.571px;">Listy i Raporty</div>
<div class="t" style="left:43.30px;top:386px;font-size:13.3px;line-height:13.3px;color:#bcc6cf;letter-spacing:0.344px;">Ustawienia</div>
<div class="t" style="left:43.30px;top:429px;font-size:13.3px;line-height:13.3px;color:#bcc6cf;letter-spacing:0.300px;">Ważne</div>
<div class="t" style="left:43.30px;top:474px;font-size:13.3px;line-height:13.3px;color:#bcc6cf;letter-spacing:0.520px;">Aktualności</div>
<div class="t" style="left:276.20px;top:172px;font-size:18.75px;line-height:18.75px;color:#fff;letter-spacing:0.8px;">Nowy Dokument</div>
<div class="t" style="left:276.20px;top:394px;font-size:18.75px;line-height:18.75px;color:#fff;letter-spacing:0.8px;">Najczęściej używane</div>
<div class="t" style="left:286.00px;top:215px;font-size:13.5px;line-height:13.5px;color:#585858;font-weight:bold;letter-spacing:0.15px;">Sprzedaż</div>
<div class="t" style="left:286.00px;top:255px;font-size:13.5px;line-height:13.5px;color:#585858;font-weight:bold;letter-spacing:0.15px;">Zakupu</div>
<div class="t" style="left:286.00px;top:295px;font-size:13.5px;line-height:13.5px;color:#585858;font-weight:bold;letter-spacing:0.15px;">Zamówienia</div>
<div class="t" style="left:286.00px;top:335px;font-size:13.5px;line-height:13.5px;color:#585858;font-weight:bold;letter-spacing:0.15px;">Nowa Faktura</div>
<div class="t" style="left:286.00px;top:437px;font-size:13.5px;line-height:13.5px;color:#585858;font-weight:bold;letter-spacing:0.15px;">Lista dokumentów</div>
<div class="t" style="left:286.00px;top:477px;font-size:13.5px;line-height:13.5px;color:#585858;font-weight:bold;letter-spacing:0.15px;">Wyszukaj</div>
<div class="t" style="left:286.00px;top:517px;font-size:13.5px;line-height:13.5px;color:#585858;font-weight:bold;letter-spacing:0.15px;">Cennik [F8]</div>
<div class="t" style="left:286.00px;top:556px;font-size:13.5px;line-height:13.5px;color:#585858;font-weight:bold;letter-spacing:0.15px;">Lista firm</div>
<div class="t" style="left:286.00px;top:597px;font-size:13.5px;line-height:13.5px;color:#585858;font-weight:bold;letter-spacing:0.556px;">Raport kasowy [F11]</div>
<div class="t" style="left:1035.40px;top:178px;font-size:18px;line-height:18px;color:#111;letter-spacing:-0.500px;">Ważne</div>
<div class="t" style="left:1149.60px;top:178px;font-size:18px;line-height:18px;color:#fff;letter-spacing:-0.080px;">Aktualności</div>
<div class="t" style="left:1025.30px;top:242px;font-size:13.5px;line-height:13.5px;color:#5e5e5e;font-weight:bold;letter-spacing:0.573px;">Witaj w programie Faktura VAT 2023</div>
<div class="t" style="left:1025.30px;top:270px;font-size:13.5px;line-height:13.5px;color:#5e5e5e;font-weight:bold;transform:scaleX(0.9414);transform-origin:0 0;">PRO</div>
<div class="t" style="left:1025.30px;top:299px;font-size:13.5px;line-height:13.5px;color:#5e5e5e;font-weight:bold;letter-spacing:0.477px;">Dzisiaj jest 09 listopad 2022 .</div>
<div class="t" style="left:1025.30px;top:329px;font-size:13.5px;line-height:13.5px;color:#5e5e5e;font-weight:bold;letter-spacing:0.190px;">Ostatnia archiwizacja:</div>
<div class="t" style="left:1025.30px;top:376px;font-size:13.5px;line-height:13.5px;color:#111;font-weight:bold;letter-spacing:-0.529px;">SPRZEDAŻ</div>
<div class="t" style="left:1025.30px;top:408px;font-size:13.5px;line-height:13.5px;color:#5e5e5e;font-weight:bold;letter-spacing:0.392px;">Miesiąc listopad netto 0,00 zł , brutto</div>
<div class="t" style="left:1025.30px;top:437px;font-size:13.5px;line-height:13.5px;color:#5e5e5e;font-weight:bold;transform:scaleX(1.1024);transform-origin:0 0;">0,00 zł</div>
<div class="t" style="left:1025.30px;top:466px;font-size:13.5px;line-height:13.5px;color:#5e5e5e;font-weight:bold;letter-spacing:0.424px;">W poprzednim miesiącu netto: 0,00 zł ,</div>
<div class="t" style="left:1025.30px;top:494px;font-size:13.5px;line-height:13.5px;color:#5e5e5e;font-weight:bold;letter-spacing:0.538px;">brutto 0,00 zł</div>
<div class="t" style="left:1025.30px;top:522px;font-size:13.5px;line-height:13.5px;color:#5e5e5e;font-weight:bold;transform:scaleX(1.1050);transform-origin:0 0;">Największa w 02-2022 brutto 12200,00</div>
<div class="t" style="left:1025.30px;top:550px;font-size:13.5px;line-height:13.5px;color:#5e5e5e;font-weight:bold;letter-spacing:-0.500px;">zł</div>
<div class="t" style="left:1025.30px;top:598px;font-size:13.5px;line-height:13.5px;color:#111;font-weight:bold;letter-spacing:-0.189px;">NALEŻNOŚCI</div>
<div class="t" style="left:1182.30px;top:329px;font-size:13.5px;line-height:13.5px;color:#1a1a1a;font-weight:bold;transform:scaleX(1.1464);transform-origin:0 0;text-decoration:underline;">02-03-2007</div>
<div class="t" style="left:997.70px;top:689px;font-size:13px;line-height:13px;color:#fff;letter-spacing:-0.197px;">Copyright 2022 by RAFSOFT.NET. Wszystkie prawa zastrzeżone.</div>
<div class="t" style="left:509.20px;top:713px;font-size:12.4px;line-height:12.4px;color:#fff;letter-spacing:-0.578px;">2022-11-09</div>
<div class="a" style="left:1000px;top:607px;width:348px;height:17px;background:#fff;border-radius:0 0 3px 3px"></div>
<svg style="left:1124px;top:180px" width="20" height="14" viewBox="0 0 20 14"><rect x="3.6" y="0.6" width="15.8" height="12.8" rx="1" fill="none" stroke="#fff" stroke-width="1.2"/><path d="M3.6 3 H0.8 V11.8 Q0.8 13.4 2.4 13.4" fill="none" stroke="#fff" stroke-width="1.2"/><rect x="5.5" y="2.5" width="5.5" height="4.5" fill="#fff"/><rect x="12" y="2.5" width="5.5" height="1.3" fill="#fff"/><rect x="12" y="5.3" width="5.5" height="1.3" fill="#fff"/><rect x="5.5" y="8.2" width="12" height="1.3" fill="#fff"/><rect x="5.5" y="10.6" width="12" height="1.3" fill="#fff"/></svg>
<svg style="left:1015px;top:180px" width="16" height="14" viewBox="0 0 16 14"><circle cx="7.5" cy="6.6" r="6.8" fill="#111"/><rect x="6.5" y="5.5" width="2" height="4.5" fill="#fff"/><circle cx="7.5" cy="3.3" r="1.1" fill="#fff"/></svg>
<svg style="left:1333px;top:225px" width="13" height="11" viewBox="0 0 13 11"><path d="M1.2 9 L6.5 3 L11.8 9" stroke="#555" stroke-width="3" fill="none"/></svg>
<svg style="left:1333px;top:579px" width="13" height="11" viewBox="0 0 13 11"><path d="M1.2 2 L6.5 8 L11.8 2" stroke="#555" stroke-width="3" fill="none"/></svg>
<svg style="left:16px;top:638px" width="200" height="46" viewBox="0 0 200 46"><defs>
<linearGradient id="lr" x1="0" x2="1"><stop offset="0" stop-color="#f09060"/><stop offset=".5" stop-color="#d02010"/><stop offset="1" stop-color="#f07050"/></linearGradient>
<linearGradient id="lg" x1="0" x2="1"><stop offset="0" stop-color="#b0f060"/><stop offset=".5" stop-color="#20a010"/><stop offset="1" stop-color="#a0e050"/></linearGradient>
<linearGradient id="ly" x1="0" x2="1"><stop offset="0" stop-color="#fff0a0"/><stop offset=".5" stop-color="#f0b030"/><stop offset="1" stop-color="#ffe080"/></linearGradient></defs>
<rect x="2" y="14" width="10.5" height="24.5" fill="url(#lr)"/>
<rect x="14" y="10" width="10.5" height="28.5" fill="url(#lg)"/>
<rect x="26" y="2" width="11" height="36.5" fill="url(#ly)"/>
<rect x="2" y="39" width="10.5" height="5" fill="#7a2a20" opacity=".5"/><rect x="14" y="39" width="10.5" height="5" fill="#2a5a20" opacity=".5"/><rect x="26" y="39" width="11" height="5" fill="#7a6020" opacity=".5"/>
<text x="47.5" y="26.8" font-family="Liberation Sans" font-weight="bold" font-size="26" fill="#fff" textLength="105" lengthAdjust="spacingAndGlyphs">rafsoft</text>
<text x="152.5" y="26.8" font-family="Liberation Sans" font-size="26" fill="#fff" textLength="42" lengthAdjust="spacingAndGlyphs">net</text>
<text x="48" y="37.8" font-family="Liberation Sans" font-weight="bold" font-style="italic" font-size="9" fill="#e8e8e8" textLength="105" lengthAdjust="spacingAndGlyphs">Oprogramowanie dla firm</text></svg>
<div class="a" style="left:342px;top:125px;width:682px;height:475px;background:#f0eff0;border:1px solid #9a9a9a;border-right-color:#bdbdbd;border-bottom-color:#b5b5b5;box-shadow:0 3px 14px rgba(0,0,0,.22)"></div>
<div class="a" style="left:343px;top:126px;width:680px;height:25px;background:#fff;"></div>
<div class="a" style="left:343px;top:151px;width:680px;height:49px;background:#3e3d40;"></div>
<div class="a" style="left:343px;top:151px;width:680px;height:1px;background:#262528;"></div>
<div class="a" style="left:343px;top:199px;width:680px;height:1px;background:#262528;"></div>
<div class="a" style="left:471px;top:212px;width:137px;height:20px;background:#fff;border:1px solid #7f7f7f"></div>
<div class="a" style="left:471px;top:238px;width:137px;height:20px;background:#fff;border:1px solid #7f7f7f"></div>
<div class="a" style="left:471px;top:263px;width:137px;height:20px;background:#fff;border:1px solid #7f7f7f"></div>
<div class="a" style="left:735px;top:239px;width:145px;height:21px;background:#fff;border:1px solid #7f7f7f"></div>
<div class="a" style="left:735px;top:263px;width:145px;height:21px;background:#fff;border:1px solid #7f7f7f"></div>
<div class="a" style="left:860px;top:241px;width:17px;height:17px;border:1px solid #6f6f6f;background:linear-gradient(#f4f4f4,#dcdcdc)"></div>
<svg style="left:864px;top:248px" width="9" height="5"><path d="M0 0 H9 L4.5 4.5 Z" fill="#111"/></svg>
<div class="a" style="left:860px;top:265px;width:17px;height:17px;border:1px solid #6f6f6f;background:linear-gradient(#f4f4f4,#dcdcdc)"></div>
<svg style="left:864px;top:272px" width="9" height="5"><path d="M0 0 H9 L4.5 4.5 Z" fill="#111"/></svg>
<div class="a" style="left:359px;top:303px;width:648px;height:256px;background:#fff;"></div>
<div class="a" style="left:359px;top:303px;width:648px;height:22px;background:linear-gradient(#e9e9ea 0%,#dcdcdd 45%,#c9c9cb 100%)"></div>
<div class="a" style="left:429px;top:303px;width:1px;height:22px;background:#a9a9ab;"></div>
<div class="a" style="left:430px;top:303px;width:1px;height:22px;background:#f4f4f4;"></div>
<div class="a" style="left:429px;top:325px;width:1px;height:234px;background:#ececec;"></div>
<div class="a" style="left:573px;top:303px;width:1px;height:22px;background:#a9a9ab;"></div>
<div class="a" style="left:574px;top:303px;width:1px;height:22px;background:#f4f4f4;"></div>
<div class="a" style="left:573px;top:325px;width:1px;height:234px;background:#ececec;"></div>
<div class="a" style="left:622px;top:303px;width:1px;height:22px;background:#a9a9ab;"></div>
<div class="a" style="left:623px;top:303px;width:1px;height:22px;background:#f4f4f4;"></div>
<div class="a" style="left:622px;top:325px;width:1px;height:234px;background:#ececec;"></div>
<div class="a" style="left:659px;top:303px;width:1px;height:22px;background:#a9a9ab;"></div>
<div class="a" style="left:660px;top:303px;width:1px;height:22px;background:#f4f4f4;"></div>
<div class="a" style="left:659px;top:325px;width:1px;height:234px;background:#ececec;"></div>
<div class="a" style="left:733px;top:303px;width:1px;height:22px;background:#a9a9ab;"></div>
<div class="a" style="left:734px;top:303px;width:1px;height:22px;background:#f4f4f4;"></div>
<div class="a" style="left:733px;top:325px;width:1px;height:234px;background:#ececec;"></div>
<div class="a" style="left:809px;top:303px;width:1px;height:22px;background:#a9a9ab;"></div>
<div class="a" style="left:810px;top:303px;width:1px;height:22px;background:#f4f4f4;"></div>
<div class="a" style="left:809px;top:325px;width:1px;height:234px;background:#ececec;"></div>
<div class="a" style="left:846px;top:303px;width:1px;height:22px;background:#a9a9ab;"></div>
<div class="a" style="left:847px;top:303px;width:1px;height:22px;background:#f4f4f4;"></div>
<div class="a" style="left:846px;top:325px;width:1px;height:234px;background:#ececec;"></div>
<div class="a" style="left:931px;top:303px;width:1px;height:22px;background:#a9a9ab;"></div>
<div class="a" style="left:932px;top:303px;width:1px;height:22px;background:#f4f4f4;"></div>
<div class="a" style="left:931px;top:325px;width:1px;height:234px;background:#ececec;"></div>
<div class="a" style="left:1006px;top:303px;width:1px;height:22px;background:#a9a9ab;"></div>
<div class="a" style="left:1007px;top:303px;width:1px;height:22px;background:#f4f4f4;"></div>
<div class="a" style="left:359px;top:567px;width:169px;height:25px;border:1px solid #c8c7c9;background:#eeedef"></div>
<div class="a" style="left:535px;top:567px;width:105px;height:25px;border:1px solid #c8c7c9;background:#eeedef"></div>
<div class="a" style="left:775px;top:567px;width:113px;height:25px;border:1px solid #c8c7c9;background:#eeedef"></div>
<div class="a" style="left:895px;top:567px;width:113px;height:25px;border:1px solid #c8c7c9;background:#eeedef"></div>
<div class="t" style="left:367.70px;top:132px;font-size:12.5px;line-height:12.5px;color:#999;letter-spacing:-0.140px;">Dokument MM</div>
<div class="t" style="left:359.70px;top:169px;font-size:11.8px;line-height:11.8px;color:#fff;font-weight:bold;letter-spacing:-0.140px;">Nowy dokument MM</div>
<div class="t" style="left:359.70px;top:216px;font-size:11.6px;line-height:11.6px;color:#000;font-weight:bold;letter-spacing:0.013px;">Numer dokumentu:</div>
<div class="t" style="left:359.70px;top:242px;font-size:11.2px;line-height:11.2px;color:#000;letter-spacing:-0.331px;">Data wystawienia:</div>
<div class="t" style="left:359.70px;top:268px;font-size:11.2px;line-height:11.2px;color:#000;letter-spacing:-0.326px;">Miejsce wystawienia:</div>
<div class="t" style="left:479.60px;top:216px;font-size:12px;line-height:12px;color:#000;letter-spacing:0.400px;">1/2022</div>
<div class="t" style="left:479.60px;top:242px;font-size:12px;line-height:12px;color:#000;letter-spacing:0.400px;">2022-11-09</div>
<div class="t" style="left:647.60px;top:216px;font-size:11.6px;line-height:11.6px;color:#000;font-weight:bold;letter-spacing:-0.333px;">Magazyn</div>
<div class="t" style="left:647.60px;top:242px;font-size:11.2px;line-height:11.2px;color:#000;letter-spacing:-0.267px;">Źródłowy (Z):</div>
<div class="t" style="left:647.60px;top:268px;font-size:11.2px;line-height:11.2px;color:#000;letter-spacing:-0.438px;">Docelowy (DO):</div>
<div class="t" style="left:743.70px;top:244px;font-size:12.5px;line-height:12.5px;color:#15153a;letter-spacing:-0.054px;">Magazyn główny</div>
<div class="t" style="left:743.70px;top:268px;font-size:12.5px;line-height:12.5px;color:#15153a;letter-spacing:-0.175px;">Magazyn 2</div>
<div class="t" style="left:363.50px;top:309px;font-size:11.6px;line-height:11.6px;color:#111;transform:scaleX(0.8810);transform-origin:0 0;">Kod</div>
<div class="t" style="left:435.50px;top:309px;font-size:11.6px;line-height:11.6px;color:#111;transform:scaleX(0.9028);transform-origin:0 0;">Nazwa</div>
<div class="t" style="left:578.50px;top:309px;font-size:11.6px;line-height:11.6px;color:#111;letter-spacing:-0.575px;">Ilość</div>
<div class="t" style="left:628.30px;top:309px;font-size:11.6px;line-height:11.6px;color:#111;transform:scaleX(0.8000);transform-origin:0 0;">j.m.</div>
<div class="t" style="left:664.20px;top:309px;font-size:11.6px;line-height:11.6px;color:#111;transform:scaleX(0.8895);transform-origin:0 0;">C.netto</div>
<div class="t" style="left:738.80px;top:309px;font-size:11.6px;line-height:11.6px;color:#111;letter-spacing:-0.133px;">W.netto</div>
<div class="t" style="left:814.00px;top:309px;font-size:11.6px;line-height:11.6px;color:#111;letter-spacing:-0.400px;">VAT</div>
<div class="t" style="left:851.40px;top:309px;font-size:11.6px;line-height:11.6px;color:#111;letter-spacing:-0.550px;">Kwota VAT</div>
<div class="t" style="left:935.70px;top:309px;font-size:11.6px;line-height:11.6px;color:#111;letter-spacing:-0.243px;">W.brutto</div>
<div class="t" style="left:388.40px;top:573px;font-size:11.6px;line-height:11.6px;color:#111;letter-spacing:-0.233px;">Wstaw z Magazyn główny</div>
<div class="t" style="left:589.30px;top:573px;font-size:11.6px;line-height:11.6px;color:#a3a3a3;transform:scaleX(0.8963);transform-origin:0 0;">Usuń</div>
<div class="t" style="left:820.30px;top:573px;font-size:11.6px;line-height:11.6px;color:#111;transform:scaleX(0.8745);transform-origin:0 0;">Lista MM</div>
<div class="t" style="left:943.80px;top:573px;font-size:11.6px;line-height:11.6px;color:#111;letter-spacing:-0.200px;">Zapisz</div>
<svg style="left:346px;top:131px" width="17" height="15" viewBox="0 0 17 15"><defs><pattern id="dith" width="2" height="2" patternUnits="userSpaceOnUse"><rect width="1" height="1" fill="#777"/><rect x="1" y="1" width="1" height="1" fill="#999"/></pattern></defs>
<path d="M7 0.8 L15 1.5 L9 7.5 H2.5 V5.5 Z" fill="url(#dith)" opacity="0.6"/>
<path d="M7 0.8 L2 5.5 V8" fill="none" stroke="#000" stroke-width="1.1" stroke-dasharray="1.2 0.8"/>
<path d="M8.5 7.5 L15 1.5 L16.2 9.5 L13.5 12.5 Z" fill="#000"/>
<path d="M13.5 5 L14.5 8 L12.5 7 Z" fill="#888"/>
<path d="M0.6 10 L3 7.8 H12.8 V13.2 L11.5 14 L10 13.2 L8.5 14 L7 13.2 L5.5 14 L4 13.2 Z" fill="#fff" stroke="#000" stroke-width="1.1"/>
<path d="M5.5 9.8 H8.5 M5 11.8 H11" stroke="#555" stroke-width="0.9"/></svg>
<svg style="left:1003px;top:133px" width="10" height="10" viewBox="0 0 10 10"><path d="M0.3 0.3 L9.7 9.7 M9.7 0.3 L0.3 9.7" stroke="#6a6a6a" stroke-width="0.9"/></svg>
<svg style="left:369px;top:571px" width="17" height="16" viewBox="0 0 17 16"><path d="M0.5 0.5 H7.5 L10.5 3.5 V15.5 H0.5 Z" fill="#f6f6f6" stroke="#777" stroke-width="0.9"/>
<g fill="#555"><rect x="2" y="5" width="1" height="1"/><rect x="2" y="7.5" width="1" height="1"/><rect x="2" y="10" width="1" height="1"/></g>
<g fill="#9ab"><rect x="4" y="5" width="5" height="0.8"/><rect x="4" y="7.5" width="5" height="0.8"/><rect x="4" y="10" width="5" height="0.8"/></g>
<path d="M9.5 7.5 H12.5 V10.5 H15.5 V13.5 H12.5 V16.5 H9.5 V13.5 H6.5 V10.5 H9.5 Z" fill="#3cb030" stroke="#1a6a10" stroke-width="0.7"/></svg>
<svg style="left:561px;top:571px" width="17" height="16" viewBox="0 0 17 16"><path d="M0 0 H8 L12 4 V9.5 H16 V13 H12 V16 H0 Z" fill="#9b9b9b"/><path d="M1.3 1.3 H7.5 L1.3 9 Z" fill="#f4f4f4"/><g fill="#9b9b9b"><rect x="2.5" y="3" width="1" height="1"/><rect x="4" y="3" width="2.5" height="0.9"/><rect x="2.5" y="5.5" width="1" height="1"/></g></svg>
<svg style="left:802px;top:571px" width="14" height="17" viewBox="0 0 14 17"><path d="M0.6 0.6 H8.5 L13.4 5.5 V16.4 H0.6 Z" fill="#fafafa" stroke="#777" stroke-width="1"/><path d="M8.5 0.6 V5.5 H13.4" fill="none" stroke="#777" stroke-width="0.9"/><g fill="#bbb"><rect x="3" y="8" width="8" height="0.8"/><rect x="3" y="10" width="8" height="0.8"/><rect x="3" y="12" width="8" height="0.8"/><rect x="3" y="14" width="8" height="0.8"/></g></svg>
<svg style="left:926px;top:572px" width="14" height="14" viewBox="0 0 14 14"><rect x="0" y="0" width="14" height="14" rx="1" fill="#1e1e1e"/><rect x="2.5" y="1" width="9" height="5.5" fill="#e8e8e8"/><rect x="3.5" y="9" width="7" height="5" fill="#555"/><rect x="7.5" y="10" width="2" height="3" fill="#eee"/></svg>
</body></html>
